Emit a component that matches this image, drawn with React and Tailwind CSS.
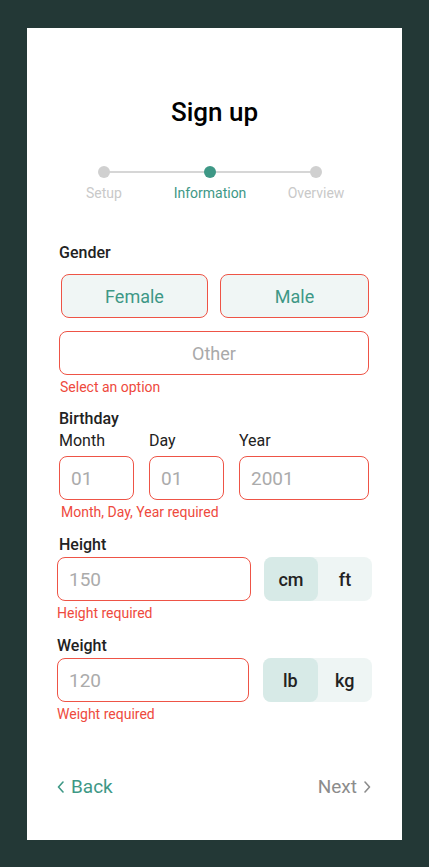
import React, { useState } from "react";

const TEAL = "text-[#3e9886]";

function Stepper() {
  const steps = ["Setup", "Information", "Overview"];
  const active = 1;
  return (
    <div className="ml-[24px] w-[318px]">
      <div className="relative grid grid-cols-3 h-[12px]">
        <div className="absolute left-[53px] right-[53px] top-[5px] h-[2px] bg-[#d6d6d6]" />
        {steps.map((s, i) => (
          <div key={s} className="relative flex justify-center">
            <div
              className={`w-[12px] h-[12px] rounded-full ${
                i === active ? "bg-[#3e9886]" : "bg-[#d0d0d0]"
              }`}
            />
          </div>
        ))}
      </div>
      <div className="grid grid-cols-3 mt-[6px]">
        {steps.map((s, i) => (
          <div
            key={s}
            className={`text-center text-[14px] leading-[18px] ${
              i === active ? TEAL : "text-[#c9c9c9]"
            }`}
          >
            {s}
          </div>
        ))}
      </div>
    </div>
  );
}

function ErrorText({ children, className = "" }) {
  return (
    <div className={`text-[14px] leading-[16px] text-[#ee4a3d] ${className}`}>
      {children}
    </div>
  );
}

function Field({ placeholder, className = "" }) {
  return (
    <input
      placeholder={placeholder}
      className={`h-[44px] rounded-[8px] border-[1.5px] border-[#ee5446] bg-white px-[11px] text-[19px] text-[#222] placeholder:text-[#ababab] outline-none ${className}`}
    />
  );
}

function UnitToggle({ options, className = "" }) {
  const [sel, setSel] = useState(0);
  return (
    <div className={`flex h-[44px] rounded-[8px] bg-[#eef5f4] ${className}`}>
      {options.map((o, i) => (
        <button
          key={o}
          onClick={() => setSel(i)}
          className={`flex-1 rounded-[8px] text-[18px] font-medium text-[#222] ${
            sel === i ? "bg-[#d7eae7]" : ""
          }`}
        >
          {o}
        </button>
      ))}
    </div>
  );
}

export default function App() {
  return (
    <div className="min-h-screen bg-[#233836] pt-[28px] pl-[27px] font-['Roboto',sans-serif]">
      <div className="w-[375px] h-[812px] bg-white pt-[68px] flex flex-col">
        <h1 className="text-center text-[26px] leading-[32px] font-medium text-black">
          Sign up
        </h1>

        <div className="mt-[38px]">
          <Stepper />
        </div>

        <div className="px-[30px]">
          {/* Gender */}
          <div className="mt-[41px] ml-[2px] text-[16px] leading-[20px] font-medium text-[#222]">
            Gender
          </div>
          <div className="mt-[11px] flex gap-[12px] pl-[4px] pr-[3px]">
            <button className={`h-[44px] w-[147px] rounded-[8px] border-[1.5px] border-[#ee5446] bg-[#f0f6f5] text-[18px] ${TEAL}`}>
              Female
            </button>
            <button className={`h-[44px] flex-1 rounded-[8px] border-[1.5px] border-[#ee5446] bg-[#f0f6f5] text-[18px] ${TEAL}`}>
              Male
            </button>
          </div>
          <button className="mt-[13px] ml-[2px] h-[44px] w-[310px] rounded-[8px] border-[1.5px] border-[#ee5446] bg-white text-[18px] text-[#a9a9a9]">
            Other
          </button>
          <ErrorText className="mt-[4px] ml-[3px]">Select an option</ErrorText>

          {/* Birthday */}
          <div className="mt-[14px] ml-[2px] text-[16px] leading-[20px] font-medium text-[#222]">
            Birthday
          </div>
          <div className="mt-[2px] ml-[2px] flex gap-[15px]">
            <div className="w-[75px]">
              <div className="text-[16px] leading-[20px] text-[#222]">Month</div>
              <Field placeholder="01" className="mt-[5px] w-[75px]" />
            </div>
            <div className="w-[75px]">
              <div className="text-[16px] leading-[20px] text-[#222]">Day</div>
              <Field placeholder="01" className="mt-[5px] w-[75px]" />
            </div>
            <div className="w-[130px]">
              <div className="text-[16px] leading-[20px] text-[#222]">Year</div>
              <Field placeholder="2001" className="mt-[5px] w-[130px]" />
            </div>
          </div>
          <ErrorText className="mt-[4px] ml-[4px]">Month, Day, Year required</ErrorText>

          {/* Height */}
          <div className="mt-[15px] ml-[2px] text-[16px] leading-[20px] font-medium text-[#222]">
            Height
          </div>
          <div className="mt-[2px] flex gap-[13px]">
            <Field placeholder="150" className="w-[194px]" />
            <UnitToggle options={["cm", "ft"]} className="w-[108px]" />
          </div>
          <ErrorText className="mt-[4px]">Height required</ErrorText>

          {/* Weight */}
          <div className="mt-[15px] text-[16px] leading-[20px] font-medium text-[#222]">
            Weight
          </div>
          <div className="mt-[2px] flex gap-[14px]">
            <Field placeholder="120" className="w-[192px]" />
            <UnitToggle options={["lb", "kg"]} className="w-[109px]" />
          </div>
          <ErrorText className="mt-[4px]">Weight required</ErrorText>

          {/* Nav */}
          <div className="mt-[53px] flex items-center justify-between pr-[1px]">
            <button className={`flex items-center gap-[7px] text-[19px] leading-[24px] ${TEAL}`}>
              <svg width="7" height="12" viewBox="0 0 7 12" fill="none">
                <path d="M6 1L1.5 6L6 11" stroke="currentColor" strokeWidth="1.6" strokeLinecap="round" strokeLinejoin="round" />
              </svg>
              Back
            </button>
            <button className="flex items-center gap-[7px] text-[19px] leading-[24px] text-[#8c8c8c]">
              Next
              <svg width="7" height="12" viewBox="0 0 7 12" fill="none">
                <path d="M1 1L5.5 6L1 11" stroke="currentColor" strokeWidth="1.6" strokeLinecap="round" strokeLinejoin="round" />
              </svg>
            </button>
          </div>
        </div>
      </div>
    </div>
  );
}
